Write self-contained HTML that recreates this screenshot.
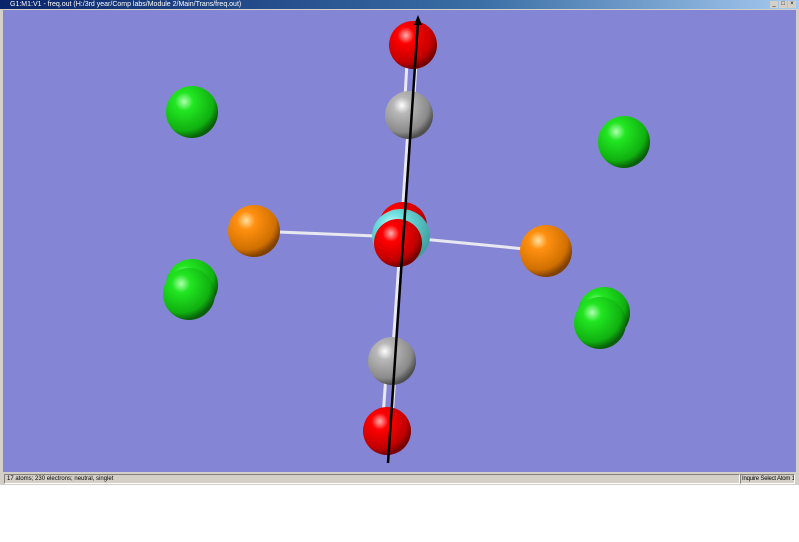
<!DOCTYPE html>
<html><head><style>
body{margin:0;width:799px;height:542px;background:#fff;overflow:hidden;font-family:"Liberation Sans",sans-serif;position:relative}
#title{position:absolute;left:0;top:0;width:799px;height:9px;background:linear-gradient(90deg,#0a246a,#3a6ea5 60%,#a6caf0);color:#fff;font-size:7px;line-height:9px;white-space:nowrap}
#title span{margin-left:10px}
#title .btns{position:absolute;right:3px;top:1px;display:flex;gap:1px}
#title .btns i{width:8px;height:7px;background:#d4d0c8;display:block;font-style:normal;color:#000;font-size:6px;line-height:7px;text-align:center}
#frame{position:absolute;left:0;top:9px;width:799px;height:476px;background:#d4d0c8}
#status{position:absolute;left:3px;top:473px;width:793px;height:11px;background:#d4d0c8;font-size:6px;line-height:11px;color:#000;white-space:nowrap}
#status .l{position:absolute;left:1px;top:1px;width:732px;height:8px;border:1px solid;border-color:#808080 #fff #fff #808080;line-height:8px;padding-left:2px;overflow:hidden}
#status .r{position:absolute;right:1px;top:1px;width:52px;height:8px;border:1px solid;border-color:#808080 #fff #fff #808080;line-height:8px;padding-left:1px;overflow:hidden;letter-spacing:-0.2px}
svg{position:absolute;left:3px;top:10px}
</style></head><body>
<div id="frame"></div>
<div id="title"><span>G1:M1:V1 - freq.out (H:/3rd year/Comp labs/Module 2/Main/Trans/freq.out)</span><div class="btns"><i>_</i><i>□</i><i>×</i></div></div>
<svg width="793" height="462" viewBox="3 10 793 462">
<defs>
<radialGradient id="r" cx="35%" cy="30%" r="70%"><stop offset="0" stop-color="#ffb0b0"/><stop offset="0.25" stop-color="#f00"/><stop offset="0.8" stop-color="#c00000"/><stop offset="1" stop-color="#700"/></radialGradient>
<radialGradient id="g" cx="35%" cy="30%" r="70%"><stop offset="0" stop-color="#b0ffb0"/><stop offset="0.25" stop-color="#22e622"/><stop offset="0.8" stop-color="#10b010"/><stop offset="1" stop-color="#086008"/></radialGradient>
<radialGradient id="o" cx="35%" cy="30%" r="70%"><stop offset="0" stop-color="#ffe0a0"/><stop offset="0.25" stop-color="#ff9010"/><stop offset="0.8" stop-color="#d07000"/><stop offset="1" stop-color="#804000"/></radialGradient>
<radialGradient id="c" cx="35%" cy="30%" r="70%"><stop offset="0" stop-color="#fff"/><stop offset="0.25" stop-color="#b8b8b8"/><stop offset="0.8" stop-color="#8a8a8a"/><stop offset="1" stop-color="#505050"/></radialGradient>
<radialGradient id="cy" cx="35%" cy="30%" r="70%"><stop offset="0" stop-color="#e0ffff"/><stop offset="0.3" stop-color="#70e0e0"/><stop offset="1" stop-color="#40a0a0"/></radialGradient>
</defs>
<rect x="3" y="10" width="793" height="462" fill="#8585d5"/>
<g stroke="#e8e8f0" stroke-width="3">
<line x1="254" y1="231" x2="401" y2="237"/>
<line x1="546" y1="251" x2="401" y2="237"/>
<line x1="408" y1="45" x2="404" y2="115"/><line x1="417" y1="45" x2="413" y2="115"/>
<line x1="409" y1="115" x2="401" y2="233"/>
<line x1="401" y1="233" x2="392" y2="361"/>
<line x1="387" y1="361" x2="382" y2="431"/><line x1="396" y1="361" x2="391" y2="431"/>
</g>
<circle cx="192" cy="112" r="26" fill="url(#g)"/>
<circle cx="624" cy="142" r="26" fill="url(#g)"/>
<circle cx="192" cy="285" r="26" fill="url(#g)"/>
<circle cx="189" cy="294" r="26" fill="url(#g)"/>
<circle cx="604" cy="313" r="26" fill="url(#g)"/>
<circle cx="600" cy="323" r="26" fill="url(#g)"/>
<circle cx="254" cy="231" r="26" fill="url(#o)"/>
<circle cx="546" cy="251" r="26" fill="url(#o)"/>
<circle cx="413" cy="45" r="24" fill="url(#r)"/>
<circle cx="409" cy="115" r="24" fill="url(#c)"/>
<circle cx="403" cy="226" r="24" fill="url(#r)"/>
<ellipse cx="401" cy="236" rx="29" ry="27" fill="url(#cy)"/>
<circle cx="398" cy="243" r="24" fill="url(#r)"/>
<circle cx="392" cy="361" r="24" fill="url(#c)"/>
<circle cx="387" cy="431" r="24" fill="url(#r)"/>
<line x1="418" y1="22" x2="388" y2="463" stroke="#000" stroke-width="2.5"/>
<polygon points="418,15 414,25 422,25" fill="#000"/>
</svg>
<div id="status"><div class="l">17 atoms; 230 electrons; neutral, singlet</div><div class="r">Inquire Select Atom 1</div></div>
</body></html>
